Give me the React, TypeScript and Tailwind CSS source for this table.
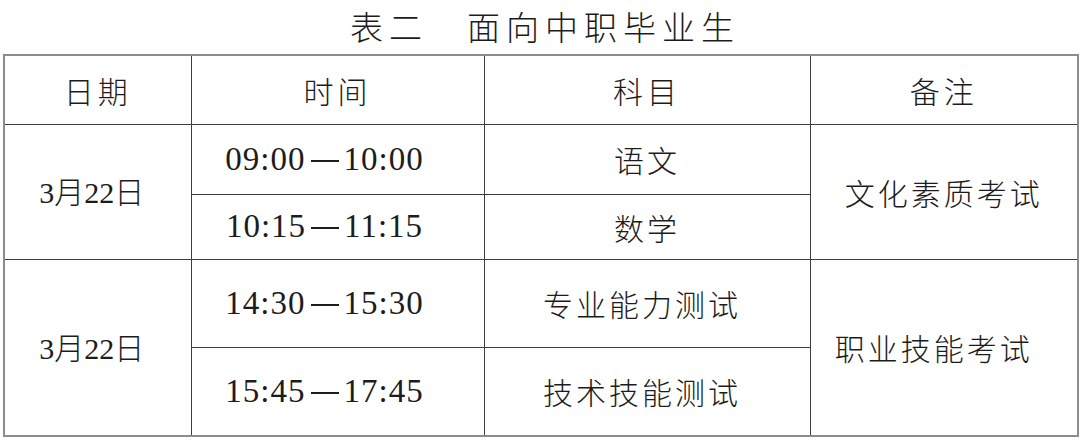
const cjk = "font-['Noto_Sans_CJK_SC','Noto_Sans_CJK_JP',sans-serif] font-light";
const num = "font-['Liberation_Serif','Noto_Sans_CJK_SC',serif] font-normal";

const cell = "border border-[#3c3c3c] text-center align-middle p-0";
const time = `${cell} ${num} text-[33px] tracking-[1px] pr-[26px]`;

function Slot({ from, to }: { from: string; to: string }) {
  return (
    <>
      {from}
      <span className="inline-block align-middle w-[28px] h-[2px] mx-[5px] -translate-y-[1px] bg-[#1c1c1c]" />
      {to}
    </>
  );
}

export default function App() {
  return (
    <div className="w-[1080px] h-[440px] bg-white text-[#1c1c1c] overflow-hidden">
      <div className={`h-[54px] flex items-center justify-center pl-[10px] pb-[1px] ${cjk} text-[33px] tracking-[6px] leading-none`}>
        表二　面向中职毕业生
      </div>
      <table className="ml-[3px] w-[1074px] border-collapse border-2 border-[#8c8c8c] table-fixed">
        <colgroup>
          <col className="w-[187px]" />
          <col className="w-[293px]" />
          <col className="w-[326px]" />
          <col className="w-[268px]" />
        </colgroup>
        <tbody className={`${cjk} text-[30px] leading-none`}>
          <tr className="h-[69px]">
            <td className={`${cell} tracking-[4px]`}>日期</td>
            <td className={`${cell} tracking-[4px]`}>时间</td>
            <td className={`${cell} tracking-[4px]`}>科目</td>
            <td className={`${cell} tracking-[4px]`}>备注</td>
          </tr>
          <tr className="h-[70px]">
            <td rowSpan={2} className={`${cell} pr-[12px]`}>
              <span className={num}>3</span>月<span className={num}>22</span>日
            </td>
            <td className={time}><Slot from="09:00" to="10:00" /></td>
            <td className={`${cell} tracking-[3px]`}>语文</td>
            <td rowSpan={2} className={`${cell} tracking-[3px]`}>文化素质考试</td>
          </tr>
          <tr className="h-[65px]">
            <td className={time}><Slot from="10:15" to="11:15" /></td>
            <td className={`${cell} tracking-[3px]`}>数学</td>
          </tr>
          <tr className="h-[88px]">
            <td rowSpan={2} className={`${cell} pr-[12px]`}>
              <span className={num}>3</span>月<span className={num}>22</span>日
            </td>
            <td className={time}><Slot from="14:30" to="15:30" /></td>
            <td className={`${cell} tracking-[3px] pr-[10px]`}>专业能力测试</td>
            <td rowSpan={2} className={`${cell} tracking-[3px] pr-[20px]`}>职业技能考试</td>
          </tr>
          <tr className="h-[89px]">
            <td className={time}><Slot from="15:45" to="17:45" /></td>
            <td className={`${cell} tracking-[3px] pr-[10px]`}>技术技能测试</td>
          </tr>
        </tbody>
      </table>
    </div>
  );
}
